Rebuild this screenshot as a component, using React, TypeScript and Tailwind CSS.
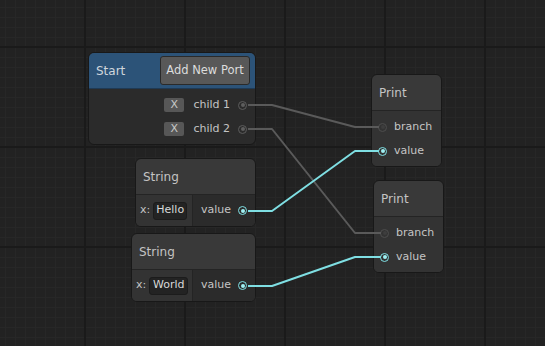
type PortKind = "cyan" | "gray" | "dim";

const minorX = Array.from({ length: 55 }, (_, i) => 5 + i * 10);
const minorY = Array.from({ length: 35 }, (_, i) => 7 + i * 10);
const majorX = [85, 185, 285, 385, 485];
const majorY = [47, 147, 247];

function Port({ kind }: { kind: PortKind }) {
  const ring =
    kind === "cyan" ? "border-[#7fdfe3]" : kind === "gray" ? "border-[#5c5c5c]" : "border-[#4d4d4d]";
  const dot = kind === "cyan" ? "bg-[#9ff0f2]" : kind === "gray" ? "bg-[#5e5e5e]" : "bg-[#3e3e3e]";
  return (
    <span className={`flex h-[9px] w-[9px] shrink-0 items-center justify-center rounded-full border-[1.5px] ${ring}`}>
      <span className={`h-[4px] w-[4px] rounded-full ${dot}`} />
    </span>
  );
}

function ChildRow({ label }: { label: string }) {
  return (
    <div className="flex h-[24px] items-center justify-end pr-[8px]">
      <span className="flex h-[14px] w-[20px] items-center justify-center rounded-[2px] bg-[#575757] text-[11px] text-[#c8c8c8]">
        X
      </span>
      <span className="ml-[9px] mr-[8px] text-[11px] text-[#c4c4c4]">{label}</span>
      <Port kind="gray" />
    </div>
  );
}

function StartNode() {
  return (
    <div className="absolute left-[88px] top-[52px] flex w-[168px] flex-col overflow-hidden rounded-[6px] border border-[#181818] bg-[#2b2b2b]">
      <div className="flex h-[36px] items-center justify-between border-b border-[#1f3a55] bg-[#2c5378] pl-[7px] pr-[5px]">
        <span className="text-[12px] text-[#d0d6dc]">Start</span>
        <span className="flex h-[29px] w-[90px] items-center justify-center rounded-[3px] border border-[#2a2a2a] bg-[#585858] text-[11.5px] text-[#dcdcdc]">
          Add New Port
        </span>
      </div>
      <div className="pb-[3px] pt-[4px]">
        <ChildRow label="child 1" />
        <ChildRow label="child 2" />
      </div>
    </div>
  );
}

function StringNode({
  pos,
  text,
  leftW,
  boxW,
}: {
  pos: string;
  text: string;
  leftW: string;
  boxW: string;
}) {
  return (
    <div className={`absolute flex flex-col overflow-hidden rounded-[6px] border border-[#181818] bg-[#393939] ${pos}`}>
      <div className="flex h-[36px] items-center border-b border-[#242424] pl-[7px] text-[12px] text-[#c4c4c4]">
        String
      </div>
      <div className="flex h-[31px]">
        <div className={`flex items-center border-r border-[#242424] bg-[#333333] pl-[4px] ${leftW}`}>
          <span className="text-[11px] text-[#c4c4c4]">x:</span>
          <span
            className={`ml-[3px] flex h-[18px] items-center justify-center rounded-[3px] border border-[#1c1c1c] bg-[#232323] text-[11px] text-[#d8d8d8] ${boxW}`}
          >
            {text}
          </span>
        </div>
        <div className="flex flex-1 items-center justify-between bg-[#2b2b2b] pl-[8px] pr-[8px]">
          <span className="text-[11px] text-[#c4c4c4]">value</span>
          <Port kind="cyan" />
        </div>
      </div>
    </div>
  );
}

function PrintNode({ pos }: { pos: string }) {
  return (
    <div className={`absolute flex w-[71px] flex-col overflow-hidden rounded-[6px] border border-[#181818] bg-[#393939] ${pos}`}>
      <div className="flex h-[36px] items-center border-b border-[#242424] pl-[7px] text-[12px] text-[#c4c4c4]">
        Print
      </div>
      <div className="bg-[#333333] pb-[3px] pt-[4px]">
        <div className="flex h-[24px] items-center pl-[6px]">
          <Port kind="dim" />
          <span className="ml-[7px] text-[11px] text-[#c4c4c4]">branch</span>
        </div>
        <div className="flex h-[24px] items-center pl-[6px]">
          <Port kind="cyan" />
          <span className="ml-[7px] text-[11px] text-[#c4c4c4]">value</span>
        </div>
      </div>
    </div>
  );
}

export default function App() {
  return (
    <div className="relative h-[346px] w-[545px] overflow-hidden bg-[#222222] font-['DejaVu_Sans',sans-serif]">
      <svg className="absolute inset-0" width="545" height="346">
        {minorX.map((x) => (
          <line key={`mx${x}`} x1={x + 0.5} y1="0" x2={x + 0.5} y2="346" stroke="#272727" strokeWidth="1" />
        ))}
        {minorY.map((y) => (
          <line key={`my${y}`} x1="0" y1={y + 0.5} x2="545" y2={y + 0.5} stroke="#272727" strokeWidth="1" />
        ))}
        {majorX.map((x) => (
          <line key={`Mx${x}`} x1={x} y1="0" x2={x} y2="346" stroke="#1a1a1a" strokeWidth="2" />
        ))}
        {majorY.map((y) => (
          <line key={`My${y}`} x1="0" y1={y} x2="545" y2={y} stroke="#1a1a1a" strokeWidth="2" />
        ))}
      </svg>

      <StartNode />
      <StringNode pos="left-[135px] top-[158px] w-[121px]" text="Hello" leftW="w-[57px]" boxW="w-[34px]" />
      <StringNode pos="left-[131px] top-[233px] w-[125px]" text="World" leftW="w-[61px]" boxW="w-[39px]" />
      <PrintNode pos="left-[371px] top-[74px]" />
      <PrintNode pos="left-[373px] top-[180px]" />

      <svg className="pointer-events-none absolute inset-0" width="545" height="346" fill="none" strokeLinejoin="round">
        <path d="M248 105 H272 L355 127 H379" stroke="#5a5a5a" strokeWidth="2" />
        <path d="M248 129 H272 L355 233 H381" stroke="#5a5a5a" strokeWidth="2" />
        <path d="M248 211 H272 L355 151 H379" stroke="#7fdfe3" strokeWidth="2" />
        <path d="M248 286 H272 L355 257 H381" stroke="#7fdfe3" strokeWidth="2" />
      </svg>
    </div>
  );
}
